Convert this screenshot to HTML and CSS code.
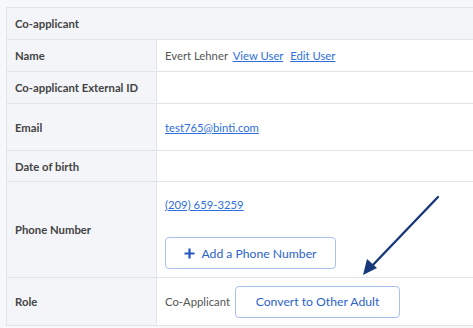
FILE: index.html
```html
<!DOCTYPE html>
<html lang="en">
<head>
    <meta charset="UTF-8">
    <title>Co-applicant</title>
    <link rel="stylesheet" href="styles.css">
</head>
<body>
    <div class="page">
        <table class="details">
            <tr class="head-row">
                <th colspan="2">Co-applicant</th>
            </tr>
            <tr class="row-name">
                <td class="label">Name</td>
                <td class="value">Evert Lehner <a href="#">View User</a> <a href="#">Edit User</a></td>
            </tr>
            <tr class="row-ext">
                <td class="label">Co-applicant External ID</td>
                <td class="value"></td>
            </tr>
            <tr class="row-email">
                <td class="label">Email</td>
                <td class="value"><a href="#">test765@binti.com</a></td>
            </tr>
            <tr class="row-dob">
                <td class="label">Date of birth</td>
                <td class="value"></td>
            </tr>
            <tr class="row-phone">
                <td class="label">Phone Number</td>
                <td class="value">
                    <a href="#" class="phone">(209) 659-3259</a>
                    <button class="btn btn-add">
                        <svg class="plus" width="11" height="11" viewBox="0 0 11 11">
                            <path d="M5.5 0.5v10M0.5 5.5h10" stroke="#2356c0" stroke-width="2.2"/>
                        </svg>
                        Add a Phone Number
                    </button>
                </td>
            </tr>
            <tr class="row-role">
                <td class="label">Role</td>
                <td class="value">
                    <div class="role">
                        <span>Co-Applicant</span>
                        <button class="btn btn-convert">Convert to Other Adult</button>
                    </div>
                </td>
            </tr>
        </table>

        <!-- annotation arrow -->
        <svg class="arrow" width="473" height="328" viewBox="0 0 473 328">
            <line x1="438" y1="197" x2="370" y2="268" stroke="#17397c" stroke-width="2.4" stroke-linecap="round"/>
            <polygon points="363,275 367,259 377,268" fill="#17397c"/>
        </svg>
    </div>
</body>
</html>
```

FILE: styles.css
```css
* {
    margin: 0;
    padding: 0;
    box-sizing: border-box;
    font-family: Lato, "Open Sans", sans-serif;
}

body {
    background-color: #f7f8fa;
    overflow: hidden;
    width: 473px;
    height: 328px;
}

.page {
    position: relative;
    width: 473px;
    height: 328px;
    overflow: hidden;
    padding: 7px 0 0 6px;
}

.details {
    width: 520px;
    border-collapse: collapse;
    border: 1px solid #e3e4e8;
    font-size: 11.3px;
    color: #555;
}

.details th,
.details td {
    border: 1px solid #e3e4e8;
    text-align: left;
    vertical-align: middle;
    white-space: nowrap;
}

.head-row th {
    height: 32px;
    padding: 0 8px;
    background-color: #f4f5f9;
    font-weight: bold;
    color: #444;
}

.label {
    width: 150px;
    padding: 0 8px;
    background-color: #f4f5f9;
    font-weight: bold;
    color: #444;
}

.value {
    background: white;
    padding: 0 8px;
}

.value a {
    color: #2e6fdd;
    text-decoration: underline;
    margin-left: 2px;
}

.value a + a {
    margin-left: 4px;
}

.row-name td { height: 32px; }
.row-ext td { height: 32px; }
.row-email td { height: 47px; }
.row-dob td { height: 31px; }
.row-phone td { height: 96px; }
.row-role td { height: 48px; }

.row-email .value a,
.value .phone {
    margin-left: 0;
}

.row-phone .value {
    vertical-align: top;
    padding-top: 16px;
}

.phone {
    display: block;
    width: max-content;
}

.btn {
    display: flex;
    align-items: center;
    justify-content: center;
    height: 32px;
    background: white;
    border: 1px solid #a8c0ee;
    border-radius: 4px;
    color: #2b63cc;
    font-size: 12.2px;
    cursor: pointer;
}

.btn-add {
    margin-top: 26px;
    width: 171px;
    gap: 6px;
}

.role {
    display: flex;
    align-items: center;
    gap: 5px;
}

.btn-convert {
    width: 165px;
}

.arrow {
    position: absolute;
    left: 0;
    top: 0;
    pointer-events: none;
}
```
